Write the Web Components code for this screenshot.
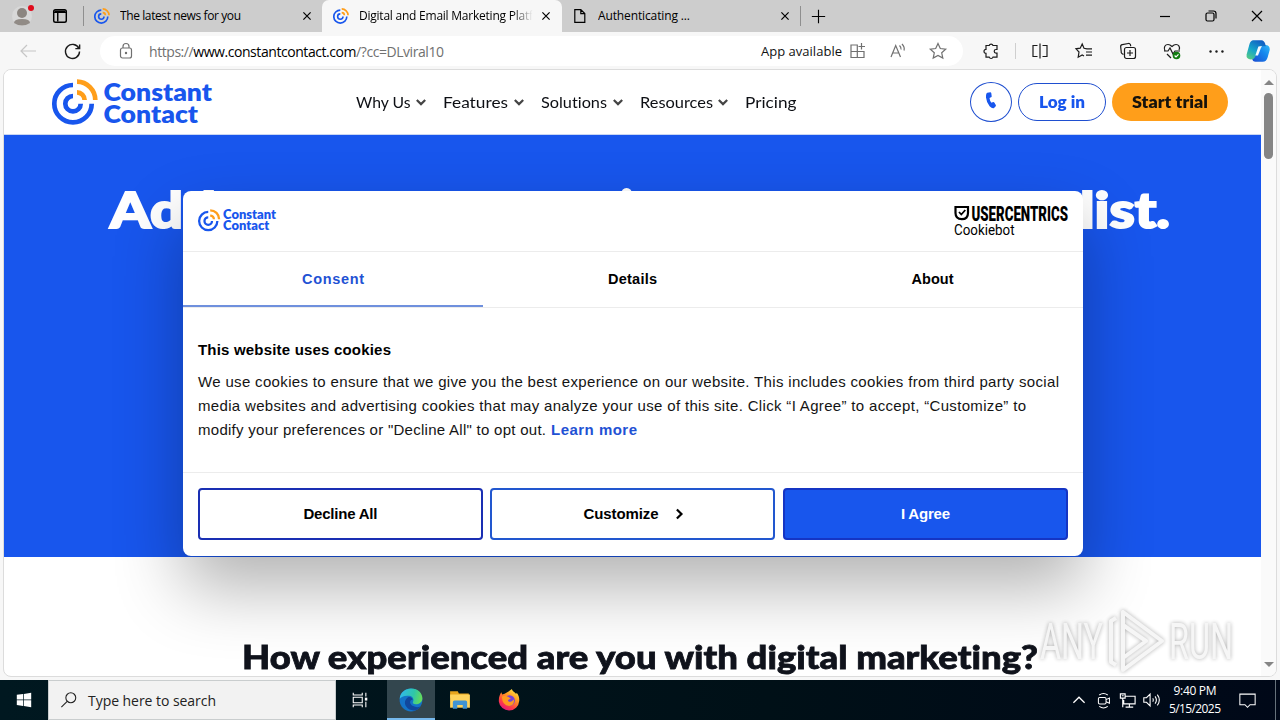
<!DOCTYPE html>
<html lang="en">
<head>
<meta charset="utf-8">
<title>Digital and Email Marketing Platform</title>
<style>
  body { margin: 0; width: 1280px; height: 720px; overflow: hidden; background: #f7f7f7; }
  desk-top { font-family: "Open Sans", "Noto Sans", sans-serif; }
</style>
</head>
<body>
<desk-top></desk-top>
<script>
// small helper so each element only has to hand over its markup
class Base extends HTMLElement {
  constructor() {
    super();
    this.attachShadow({ mode: "open" });
  }
  connectedCallback() {
    this.shadowRoot.innerHTML = this.render();
  }
}

// stroke icons are drawn on a 20x20 grid
const ICONS = {
  close: `<path d="M5.5 5.5l9 9M14.5 5.5l-9 9"/>`,
  plus: `<path d="M10 3v14M3 10h14"/>`,
  minimize: `<path d="M5 10.5h10"/>`,
  restore: `<rect x="5" y="7" width="8" height="8" rx="1.5"/><path d="M7.5 5h5a2.5 2.5 0 0 1 2.5 2.5v5"/>`,
  winclose: `<path d="M5 5l10 10M15 5L5 15"/>`,
  workspace: `<rect x="3" y="3" width="14" height="14" rx="2"/><path d="M3 6h14M4 4.8h12M7.5 6v10"/>`,
  page: `<path d="M3.500 2h7.500l5 5v11h-12.500zM11 2v5h5"/>`,
  back: `<path d="M18 10H3M9 4l-6 6 6 6"/>`,
  reload: `<path d="M16.8 7A7.4 7.4 0 1 0 17.4 10M17.5 2.5V7H13"/>`,
  lock: `<rect x="4.5" y="7" width="11" height="10" rx="2"/><path d="M7 7V5.5a3 3 0 0 1 6 0V7"/><circle cx="10" cy="12" r=".6"/>`,
  app: `<path d="M3 4h6.300v12.500H3zM3 10.500h13v6H3M16 10.500v6M13.500 2v6.500M10.500 5.500h6.500"/>`,
  read: `<path d="M3 16L7.7 4.5 12.5 16M4.7 12h6M11.5 4.5q2 2 1.5 4M14 3q3 3 2 6.5"/>`,
  star: `<path d="M10 2.5l2.300 5 5.400.6-4 3.700 1.100 5.300L10 14.400l-4.800 2.700 1.100-5.300-4-3.700 5.400-.6z"/>`,
  puzzle: `<path d="M5 4.5h3.200a2 2 0 0 1 3.800 0h4v4h-1a1.800 1.800 0 0 0 0 3.600h1v4h-4a2 2 0 0 1-3.800 0H5v-3.700a2 2 0 1 1 0-4z"/>`,
  split: `<path d="M10 2.5v15M7.5 4.5H3v11h4.5M12.5 4.500H17v11h-4.500"/>`,
  favs: `<path d="M13 7.800L10 7.300 8.200 3 6.200 7.200 2 7.800l3 3.200-.8 5.200L8.200 14l1.800 1M12 7.800h6M12 11h6M12 14.200h6"/>`,
  collect: `<path d="M5.500 13.500l-1.600-1a2 2 0 0 1-.7-2L2.700 6a2 2 0 0 1 1.600-2.300l6-1.200a2 2 0 0 1 2.300 1.800v1"/><rect x="6.500" y="6.500" width="11" height="11" rx="2"/><path d="M12 9v6M9 12h6"/>`,
  health: `<path d="M3 10C1 6 3.500 3.500 6 3.500c2 0 3 1 4 2 1-1 2-2 4-2 2.500 0 4.500 2.500 3 5.500M2 10h4l2-3 3 6 2-3h5M5 13l4 4"/><circle cx="14.500" cy="14.500" r="3.800" fill="#117d10" stroke="none"/><path d="M12.600 14.500l1.400 1.400 2.500-2.600" stroke="#fff"/>`,
  more: `<g fill="currentColor" stroke="none"><circle cx="3" cy="10" r="1.400"/><circle cx="10" cy="10" r="1.400"/><circle cx="17" cy="10" r="1.400"/></g>`,
  down: `<path d="M3 6.500l7 7 7-7"/>`,
  right: `<path d="M7 3.500l6.500 6.500L7 16.500"/>`,
  up: `<path d="M2 14l8-8 8 8"/>`,
  search: `<circle cx="12" cy="7.500" r="5.500"/><path d="M8 11.500L1.500 18"/>`,
  phone: `<path d="M6.300 1.800l3-.6q.9 0 1 1l.4 3q0 .8-.7 1l-1.500.7q.2 2.600 2 4.800l1.600-.6q.7-.2 1.200.4l1.500 2.400q.4.900-.3 1.500l-1.500 1.500q-1.600 1-4.400-1.700Q5.500 11.500 5 6.500 4.800 2.600 6.300 1.800z" fill="currentColor" stroke="none"/>`,
  taskview: `<path d="M2.500 2v2.500h10V2M2.500 18v-2.500h10V18M2.500 7h10v6h-10zM16.500 2v4M16.500 12v6"/><rect x="16" y="8" width="1.500" height="2" fill="currentColor"/>`,
  windows: `<path d="M2 4.300l7-1v6.200H2zM9.800 3.200L18 2v7.500H9.800zM2 10.300h7v6.300l-7-1zM9.800 10.300H18V18l-8.200-1.300z" fill="currentColor" stroke="none"/>`,
  meet: `<rect x="4" y="6.500" width="9" height="7.500" rx="1.500"/><path d="M13 9l4-1.800v6.100L13 11.500M5 3.500q5-3.500 10 0M5 17q5 3.500 10 0"/>`,
  network: `<path d="M7.500 5.500H18v8H6v-4M12 13.500v3.500M8 17h8M2.500 3h5v4.500h-5zM5 7.500V17M4 5h2"/>`,
  sound: `<path d="M2 7.500h3l4-4v13l-4-4H2zM12 8q1.300 2 0 4M14.500 6q3 4 0 8M17 4q4.500 6 0 12"/>`,
  notice: `<path d="M1 2.500h18v12.500h-6l-3 3-3-3H1z"/>`,
  avatar: `<g stroke="none"><circle cx="10" cy="10" r="10" fill="#d8d8d8"/><circle cx="10" cy="7" r="5" fill="#8b8580"/><path d="M2 17q0-4 8-4t8 4q-8 5-16 0z" fill="#918b86"/></g>`,
  copilot: `<g stroke="none"><path d="M14 19H8q-2.500 0-3-3L8 5l4.500 2q.8-2 3.500-2 4 0 3.800 4L18 15.500Q17 19 14 19z" fill="url(#cpb)"/><path d="M6 1h7q2 0 3 3l.5 2h-4q-2 0-2.600 2L8 14q-.8 3-4 3-4 0-3.500-4L3 4Q4 1 6 1z" fill="url(#cpa)"/><path d="M10.300 6.300h2.600L10 13.700H7.800z" fill="#f4fbff"/></g>
    <defs><linearGradient id="cpa" x1="0" y1="1" x2=".6" y2="0"><stop stop-color="#5fd07a"/><stop offset=".5" stop-color="#16a6c9"/><stop offset="1" stop-color="#1262c4"/></linearGradient>
    <linearGradient id="cpb" x1="0" y1="1" x2="1" y2="0"><stop stop-color="#1b4bd0"/><stop offset=".6" stop-color="#1688ee"/><stop offset="1" stop-color="#32baf7"/></linearGradient></defs>`,
  edge: `<g stroke="none"><circle cx="10" cy="10" r="9.500" fill="#1473c8"/><path d="M.6 9C1 3.500 5.500.5 10 .5c6 0 9.500 4.200 9.500 8 0 3.500-3 5-5.500 5-2 0-3-.8-2.300-2 .8-1.300.5-4.500-3.200-5C4.500 6 1.500 7.500.6 9z" fill="url(#ea)"/><path d="M8 7.500c-3 1.500-4 5-2 8 2 3 6 4 9 2.600 1-.5 2-1.500 2.800-2.600-2 .8-4.500.6-6-.4C9 13.500 8 10 11.500 9.500 11 8 9.500 7.200 8 7.500z" fill="#11479c"/></g>
    <defs><linearGradient id="ea" x1="0" y1=".3" x2="1" y2=".5"><stop stop-color="#31b9ee"/><stop offset=".6" stop-color="#2fc6a8"/><stop offset="1" stop-color="#66dc58"/></linearGradient></defs>`,
  folder: `<g stroke="none"><path d="M1 2h7l1 2h9v4H1z" fill="#e8a51d"/><path d="M1 5h18v12H1z" fill="#ffd35c"/><path d="M3.500 18v-6q0-1.500 1.500-1.500h10q1.500 0 1.500 1.500v6h-4v-3.500h-5V18z" fill="#3f93d4"/></g>`,
  firefox: `<g stroke="none"><path d="M10 2c1-1 2-1.500 2.500-2 .5 2 3 3 4 4.500l.5-1c2 2.500 2.500 5 2.300 7.500A9.300 9.300 0 0 1 .8 11.500C.5 8 1.500 5.500 3 3l.8 2L6 4.300z" fill="url(#ff)"/><circle cx="10.500" cy="10.500" r="4.800" fill="#7542d9"/><path d="M3.500 7q3-2 6.500.5l1.800 1.500Q9 9 9 11c2 1.500 4 0 5.500-1.500Q15 15 10 15.500 4 15 3.500 7z" fill="#ff9a1f"/></g>
    <defs><linearGradient id="ff" x1=".9" y1="0" x2=".3" y2="1"><stop stop-color="#fff04a"/><stop offset=".4" stop-color="#ff9a22"/><stop offset=".75" stop-color="#ff3b47"/><stop offset="1" stop-color="#e3177c"/></linearGradient></defs>`
};

class UiIcon extends Base {
  render() {
    const size = this.getAttribute("size") || 20;
    const stroke = this.getAttribute("stroke") || 1.2;
    return `
    <style>
      :host { display: inline-flex; flex: none; align-items: center; justify-content: center; }
      svg { display: block; overflow: visible; }
    </style>
    <svg width="${size}" height="${size}" viewBox="0 0 20 20" fill="none" stroke="currentColor" stroke-width="${stroke}">${ICONS[this.getAttribute("name")]}</svg>`;
  }
}

// one line of text that fills the width given in "w":
// tracked by default, widened glyphs with the "stretch" attribute
class FitLine extends Base {
  render() {
    return `
    <style>
      :host { display: inline-block; flex: none; white-space: nowrap; width: ${this.getAttribute("w")}px; font-variant-ligatures: none; }
      span { display: inline-block; transform-origin: 0 0; }
    </style><span><slot></slot></span>`;
  }
  connectedCallback() {
    super.connectedCallback();
    const span = this.shadowRoot.querySelector("span");
    const want = Number(this.getAttribute("w"));
    const natural = span.getBoundingClientRect().width;
    if (this.hasAttribute("stretch")) {
      span.style.transform = `scaleX(${want / natural})`;
    } else {
      span.style.letterSpacing = (want - natural) / (this.textContent.trim().length - 1) + "px";
    }
  }
}

const RINGS = `
  <g fill="none" stroke-width="4.700">
    <g stroke="#1856ed"><path d="M21 6a18.700 18.700 0 1 0 18.700 18.700"/><path d="M21 17a7.700 7.700 0 1 0 7.700 7.700"/></g>
    <g stroke="#ff9e1a"><path d="M25 2.700A18.300 18.300 0 0 1 43.300 21"/><path d="M25 13.400a7.600 7.600 0 0 1 7.600 7.600"/></g>
  </g>`;

class BrandLogo extends Base {
  render() {
    const w = this.getAttribute("width");
    return `
    <style>
      :host { display: block; flex: none; }
      svg { display: block; overflow: visible; }
      text { font: 800 25px Lato, sans-serif; fill: #1856ed; }
    </style>
    <svg width="${w}" height="${w * 46 / 160}" viewBox="0 0 160 46">${RINGS}
      <text x="51.500" y="21.500" textLength="108.500" lengthAdjust="spacingAndGlyphs">Constant</text>
      <text x="51.500" y="44" textLength="94.500" lengthAdjust="spacingAndGlyphs">Contact</text>
    </svg>`;
  }
}

class BrandMark extends Base {
  render() {
    return `
    <style>:host { display: block; flex: none; } svg { display: block; }</style>
    <svg width="16" height="16" viewBox="0 0 46 46">${RINGS}</svg>`;
  }
}

class BrowserTab extends Base {
  render() {
    return `
    <style>
      :host { display: flex; align-items: center; box-sizing: border-box; width: 238px; height: 32px; padding: 0 7px 0 10px; font-size: 12px; color: #000; }
      :host([active]) { width: 240px; padding: 0 8px 0 11px; background: #f7f7f7; border-radius: 7px 7px 0 0; }
      .label { margin-left: 10px; flex: 1; overflow: hidden; white-space: nowrap; line-height: 20px; }
      :host([active]) .label { -webkit-mask: linear-gradient(90deg, #000 86%, transparent 97%); }
    </style>
    <slot name="icon"></slot>
    <div class="label"><slot></slot></div>
    <ui-icon name="close" size="16" stroke="1.500"></ui-icon>`;
  }
}

class TabStrip extends Base {
  render() {
    return `
    <style>
      :host { display: flex; height: 32px; background: #cdcdcd; align-items: center; }
      .who { position: relative; margin-left: 12px; display: flex; }
      .who i { position: absolute; right: -2px; top: -1px; width: 6px; height: 6px; border-radius: 50%; background: #e00b1c; }
      .work { margin: 0 14px 0 19px; }
      .line { width: 1px; height: 20px; background: #8f8f8f; }
      .controls { margin-left: auto; display: flex; padding-right: 13px; gap: 26px; }
      .plus { margin-left: 8px; }
    </style>
    <div class="who"><ui-icon name="avatar" size="20"></ui-icon><i></i></div>
    <ui-icon class="work" name="workspace" size="18" stroke="1.600"></ui-icon>
    <div class="line"></div>
    <browser-tab><brand-mark slot="icon"></brand-mark><fit-line w="121">The latest news for you</fit-line></browser-tab>
    <browser-tab active><brand-mark slot="icon"></brand-mark><fit-line w="174">Digital and Email Marketing Platf</fit-line></browser-tab>
    <browser-tab><ui-icon slot="icon" name="page" size="16" stroke="1.500"></ui-icon><fit-line w="92">Authenticating ...</fit-line></browser-tab>
    <div class="line"></div>
    <ui-icon class="plus" name="plus" size="19"></ui-icon>
    <div class="controls">
      <ui-icon name="minimize"></ui-icon><ui-icon name="restore"></ui-icon><ui-icon name="winclose"></ui-icon>
    </div>`;
  }
}

class AddressBar extends Base {
  render() {
    return `
    <style>
      :host { display: flex; height: 38px; align-items: center; background: #f7f7f7; color: #1b1b1b; }
      .back { margin-left: 18px; color: #c6c6c6; }
      .reload { margin: 0 18px 0 25px; }
      .pill { display: flex; align-items: center; box-sizing: border-box; width: 863px; height: 30px; padding: 0 15px 0 16px; border-radius: 15px; background: #fff; color: #707070; }
      .url { margin-left: 13px; font-size: 14px; }
      .url b { font-weight: 400; color: #000; }
      .app { margin: 0 6px 0 auto; font-size: 13px; color: #111; }
      .pill .gap { margin-left: 20px; }
      .tools { display: flex; align-items: center; margin-left: 6px; }
      .tools ui-icon { width: 44px; }
      .line { width: 1px; height: 16px; background: #cfcfcf; margin: 0 2px 0 2px; }
      .tools .co { width: 39px; }
    </style>
    <ui-icon class="back" name="back"></ui-icon>
    <ui-icon class="reload" name="reload" size="19" stroke="1.500"></ui-icon>
    <div class="pill">
      <ui-icon name="lock"></ui-icon>
      <fit-line class="url" w="295">https://<b>www.constantcontact.com</b>/?cc=DLviral10</fit-line>
      <fit-line class="app" w="81">App available</fit-line>
      <ui-icon name="app"></ui-icon>
      <ui-icon class="gap" name="read"></ui-icon>
      <ui-icon class="gap" name="star"></ui-icon>
    </div>
    <div class="tools">
      <ui-icon name="puzzle"></ui-icon><div class="line"></div>
      <ui-icon name="split"></ui-icon><ui-icon name="favs"></ui-icon><ui-icon name="collect"></ui-icon>
      <ui-icon name="health"></ui-icon><ui-icon name="more" size="17"></ui-icon><ui-icon class="co" name="copilot" size="24"></ui-icon>
    </div>`;
  }
}

class SiteHeader extends Base {
  render() {
    return `
    <style>
      :host { display: flex; align-items: center; height: 65px; box-sizing: border-box; padding: 0 33px 0 48px; background: #fff; border-bottom: 1px solid #c9d6f3; font: 16px Lato, sans-serif; color: #0d0f14; }
      brand-logo { margin-top: -1px; }
      nav { display: flex; gap: 16px; margin: -2px 0 0 144px; }
      nav div { display: flex; align-items: center; gap: 5px; }
      nav ui-icon { color: #444; width: 11.700px; padding-top: 2px; }
      .buttons { display: flex; align-items: center; gap: 6px; margin-left: auto; font-weight: 800; }
      .buttons div { display: flex; align-items: center; justify-content: center; box-sizing: border-box; height: 38px; border-radius: 20px; border: 1px solid #1f4fd0; color: #1856ed; padding-bottom: 2px; }
      .buttons .tel { width: 42px; height: 40px; border-radius: 50%; }
      .buttons .login { width: 88px; }
      .buttons .trial { width: 116px; background: #ff9e1a; border: 0; color: #16120c; }
    </style>
    <brand-logo width="160"></brand-logo>
    <nav>
      <div><fit-line stretch w="54.500">Why Us</fit-line><ui-icon name="down" size="12" stroke="3.600"></ui-icon></div>
      <div><fit-line stretch w="65">Features</fit-line><ui-icon name="down" size="12" stroke="3.600"></ui-icon></div>
      <div><fit-line stretch w="66">Solutions</fit-line><ui-icon name="down" size="12" stroke="3.600"></ui-icon></div>
      <div><fit-line stretch w="73">Resources</fit-line><ui-icon name="down" size="12" stroke="3.600"></ui-icon></div>
      <div><fit-line stretch w="51.500">Pricing</fit-line></div>
    </nav>
    <div class="buttons">
      <div class="tel"><ui-icon name="phone" size="20"></ui-icon></div>
      <div class="login"><fit-line stretch w="46">Log in</fit-line></div>
      <div class="trial"><fit-line stretch w="76">Start trial</fit-line></div>
    </div>`;
  }
}

class ConsentButton extends Base {
  render() {
    return `
    <style>
      :host { display: flex; align-items: center; justify-content: center; flex: 1; box-sizing: border-box; height: 52px; padding-bottom: 2px; border: 2px solid #1a2fb3; border-radius: 4px; font-weight: 700; color: #000; }
      :host([kind="custom"]) { border-color: #2257cf; }
      :host([kind="agree"]) { background: #1856ed; border-color: #1535c4; color: #fff; }
    </style><slot></slot>`;
  }
}

class CookieDialog extends Base {
  render() {
    return `
    <style>
      :host { display: flex; flex-direction: column; box-sizing: border-box; width: 900px; height: 365px; background: #fff; border-radius: 8px; box-shadow: 0 32px 68px rgba(0,0,0,.3); font: 15px "Liberation Sans", Arial, sans-serif; color: #141414; overflow: hidden; }
      header { display: flex; align-items: center; justify-content: space-between; height: 60px; padding: 0 15px; border-bottom: 1px solid #ececec; }
      header brand-logo { margin-top: -1px; }
      header svg { display: block; overflow: visible; }
      .tabs { display: grid; grid-template-columns: repeat(3, 1fr); height: 55px; border-bottom: 1px solid #ececec; font-weight: 700; color: #000; font-size: 14.500px; }
      .tabs div { display: flex; align-items: center; justify-content: center; border-bottom: 2px solid transparent; margin: 0 1px -1px 0; }
      .tabs .on { color: #1f52d4; border-color: #6f90dd; margin: 0; }
      .text { flex: 1; padding: 30px 15px 0; line-height: 24px; }
      h2 { margin: 0 0 8px; font-size: 15px; line-height: 24px; color: #000; }
      .row { display: flex; gap: 5px; }
      a { color: #1f52d4; font-weight: 700; }
      footer { display: grid; grid-template-columns: 285px 285px 285px; justify-content: space-between; padding: 15px 15px 16px; border-top: 1px solid #ececec; }
      .mid { margin: 0 .5px 0 -.5px; }
      .next { margin: 2px -4px 0 13px; }
    </style>
    <header>
      <brand-logo width="78"></brand-logo>
      <svg width="114" height="32" viewBox="0 0 114 32" font-family="Roboto, sans-serif">
        <path d="M1.500 2h12.500v6q0 6.200-6.200 6.200T1.500 8z" fill="none" stroke="#000" stroke-width="2.200"/>
        <path d="M5 7l2.300 2.500L11.300 5" fill="none" stroke="#000" stroke-width="1.800"/>
        <text x="17.500" y="16" font-size="21" font-weight="900" textLength="96.500" lengthAdjust="spacingAndGlyphs">USERCENTRICS</text>
        <text x="0" y="30" font-size="14.500" textLength="60.500" lengthAdjust="spacingAndGlyphs">Cookiebot</text>
      </svg>
    </header>
    <div class="tabs">
      <div class="on"><fit-line w="62">Consent</fit-line></div>
      <div><fit-line w="49">Details</fit-line></div>
      <div><fit-line w="42">About</fit-line></div>
    </div>
    <div class="text">
      <h2><fit-line w="193">This website uses cookies</fit-line></h2>
      <div class="row"><fit-line w="861">We use cookies to ensure that we give you the best experience on our website. This includes cookies from third party social</fit-line></div>
      <div class="row"><fit-line w="828">media websites and advertising cookies that may analyze your use of this site. Click “I Agree” to accept, “Customize” to</fit-line></div>
      <div class="row"><fit-line w="348">modify your preferences or "Decline All" to opt out.</fit-line><a><fit-line w="86">Learn more</fit-line></a></div>
    </div>
    <footer>
      <consent-button><fit-line w="74">Decline All</fit-line></consent-button>
      <consent-button class="mid" kind="custom"><fit-line w="75">Customize</fit-line><ui-icon class="next" name="right" size="14" stroke="3.200"></ui-icon></consent-button>
      <consent-button kind="agree"><fit-line w="49">I Agree</fit-line></consent-button>
    </footer>`;
  }
}

class PageView extends Base {
  render() {
    return `
    <style>
      :host { position: relative; display: flex; box-sizing: border-box; height: 608px; margin: -1px 3px 0; border: 1px solid #dcdcdc; border-radius: 8px; background: #fff; overflow: hidden; }
      main { width: 1257px; }
      .hero { display: flex; justify-content: space-between; box-sizing: border-box; height: 422px; padding: 44px 91px 0 106px; background: #1856ed; color: #fff; font: 900 49px/60px Lato, sans-serif; -webkit-text-stroke: 2px #fff; }
      .mid { margin: -2px 43px 0 0; }
      h1 { margin: 79px 0 0 238px; font: 900 33px/40px Lato, sans-serif; color: #10131c; white-space: nowrap; -webkit-text-stroke: .8px #10131c; }
      .scroll { display: flex; flex-direction: column; align-items: center; flex: 1; background: #fafafa; padding: 10px 0 9px; }
      .thumb { width: 9px; height: 66px; border-radius: 5px; background: #858585; margin: 8px 0 auto; }
      .scroll svg { display: block; }
      cookie-dialog { position: absolute; left: 179px; top: 121px; }
    </style>
    <main>
      <site-header></site-header>
      <div class="hero"><fit-line stretch w="106">Add</fit-line><span class="mid">i</span><fit-line stretch w="90">list.</fit-line></div>
      <h1><fit-line stretch w="796">How experienced are you with digital marketing?</fit-line></h1>
    </main>
    <div class="scroll">
      <svg width="10" height="5"><path d="M0 5l5-5 5 5z" fill="#858585"/></svg>
      <div class="thumb"></div>
      <svg width="10" height="5"><path d="M0 0l5 5 5-5z" fill="#858585"/></svg>
    </div>
    <cookie-dialog></cookie-dialog>`;
  }
}

class WaterMark extends Base {
  render() {
    return `
    <style>
      :host { position: absolute; left: 1036px; top: 606px; opacity: .8; }
      svg { display: block; overflow: visible; filter: drop-shadow(0 0 2px rgba(0,0,0,.4)); }
      text { font: 400 50px Roboto, sans-serif; }
    </style>
    <svg width="202" height="70" fill="#f4f4f4">
      <text x="4" y="53" textLength="63" lengthAdjust="spacingAndGlyphs">ANY</text>
      <text x="133" y="53" textLength="64" lengthAdjust="spacingAndGlyphs">RUN</text>
      <g fill="none" stroke="#f4f4f4" stroke-width="4" stroke-linejoin="round">
        <path d="M87 6v58l39-29zM87 19l23 16-23 17M80 12l-5 3v41l5 3"/>
      </g>
    </svg>`;
  }
}

class TaskBar extends Base {
  render() {
    return `
    <style>
      :host { display: flex; height: 40px; background: linear-gradient(90deg, #001820, #001017 60%, #000818); color: #fff; }
      ui-icon { height: 40px; }
      .start { width: 48px; }
      .search { display: flex; align-items: center; box-sizing: border-box; width: 288px; padding-left: 11px; background: #f2f2f2; border: 1px solid #c9cdce; color: #222; font-size: 14px; gap: 10px; }
      .search ui-icon { height: 20px; }
      .app { width: 49px; }
      .edge { width: 48px; margin-left: 3px; background: #33464e; box-shadow: inset 0 -2px #76b9ed; }
      .tray { display: flex; margin-left: auto; }
      .tray ui-icon { width: 24px; }
      .clock { width: 64px; display: flex; flex-direction: column; align-items: center; justify-content: center; font-size: 12px; line-height: 18px; padding-bottom: 1px; }
      .tray .note { width: 40px; padding-right: 8px; }
      .end { border-left: 1px solid #66717a; width: 4px; }
    </style>
    <ui-icon class="start" name="windows" size="18"></ui-icon>
    <div class="search"><ui-icon name="search" size="18"></ui-icon><fit-line w="128">Type here to search</fit-line></div>
    <ui-icon class="start" name="taskview" size="18"></ui-icon>
    <ui-icon class="edge" name="edge" size="24"></ui-icon>
    <ui-icon class="app" name="folder" size="22"></ui-icon>
    <ui-icon class="app" name="firefox" size="22"></ui-icon>
    <div class="tray">
      <ui-icon name="up" size="14" stroke="1.800"></ui-icon><ui-icon name="meet" size="17"></ui-icon>
      <ui-icon name="network" size="19"></ui-icon><ui-icon name="sound" size="18"></ui-icon>
      <div class="clock"><fit-line w="43">9:40 PM</fit-line><fit-line w="52">5/15/2025</fit-line></div>
      <ui-icon class="note" name="notice" size="17"></ui-icon>
      <div class="end"></div>
    </div>`;
  }
}

class DeskTop extends Base {
  render() {
    return `
    <style>
      :host { display: grid; grid-template-rows: 32px 38px 610px 40px; width: 1280px; height: 720px; }
    </style>
    <tab-strip></tab-strip>
    <address-bar></address-bar>
    <page-view></page-view>
    <task-bar></task-bar>
    <water-mark></water-mark>`;
  }
}

// inner elements first, the desktop last
customElements.define("ui-icon", UiIcon);
customElements.define("fit-line", FitLine);
customElements.define("brand-logo", BrandLogo);
customElements.define("brand-mark", BrandMark);
customElements.define("browser-tab", BrowserTab);
customElements.define("tab-strip", TabStrip);
customElements.define("address-bar", AddressBar);
customElements.define("site-header", SiteHeader);
customElements.define("consent-button", ConsentButton);
customElements.define("cookie-dialog", CookieDialog);
customElements.define("page-view", PageView);
customElements.define("water-mark", WaterMark);
customElements.define("task-bar", TaskBar);
customElements.define("desk-top", DeskTop);
</script>
</body>
</html>
